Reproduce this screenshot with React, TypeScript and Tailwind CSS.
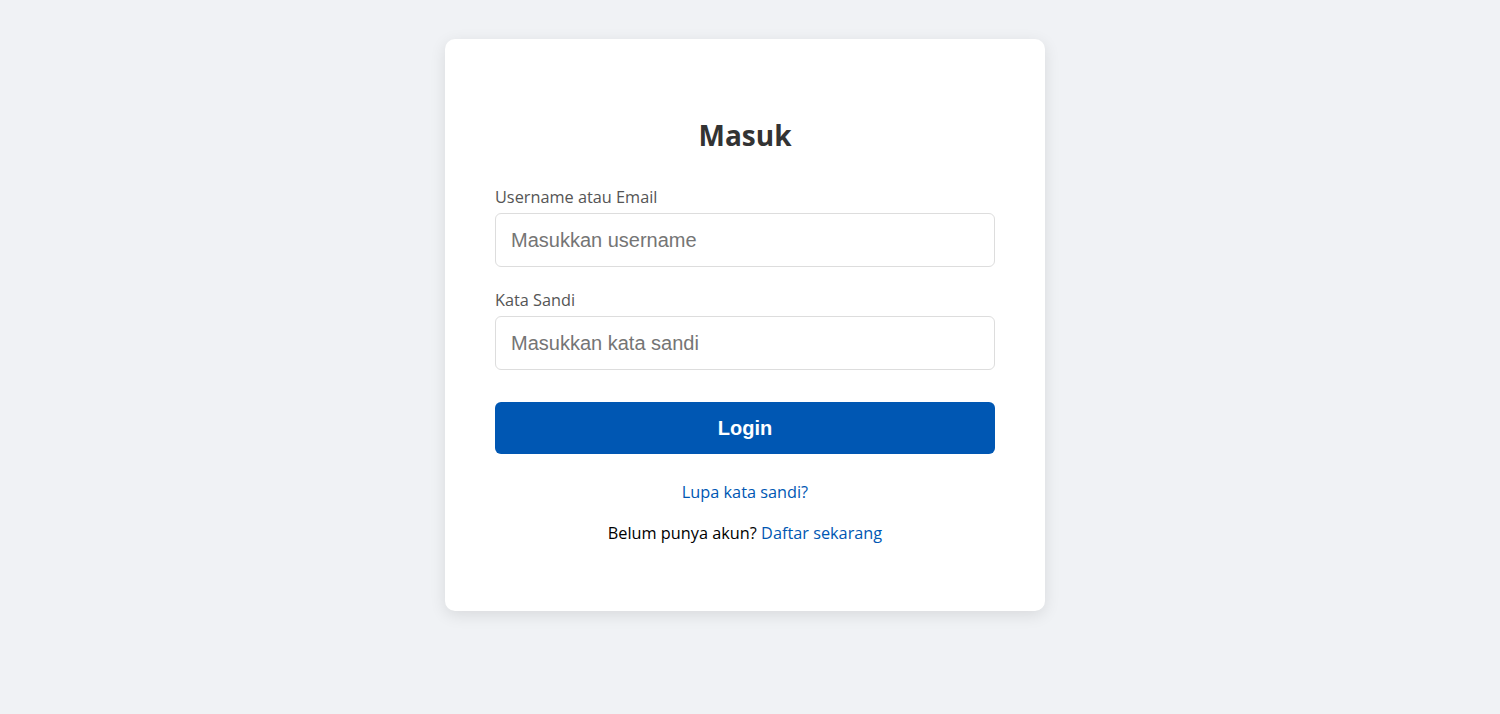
import React from "react";

export default function App() {
  const seg = { fontFamily: '"Open Sans", "Noto Sans", sans-serif' };
  const arial = { fontFamily: '"Liberation Sans", Arial, sans-serif' };
  return (
    <div className="min-h-[714px] w-full bg-[#f0f2f5] pr-[10px] pt-[39px]" style={seg}>
      <div className="mx-auto w-[600px] rounded-[10px] bg-white px-[50px] pb-[66px] pt-[50px] shadow-[0_4px_16px_rgba(0,0,0,0.1)]">
        <h2 className="mt-[29px] mb-[33px] text-center text-[28px] font-bold leading-[34px] text-[#333]">
          Masuk
        </h2>
        <form onSubmit={(e) => e.preventDefault()}>
          <div className="mb-[21px]">
            <label className="mb-1 block text-[16.3px] leading-6 text-[#555]">Username atau Email</label>
            <input
              type="text"
              placeholder="Masukkan username"
              className="block h-[54px] w-full rounded-[6px] border border-[#ddd] px-[15px] text-[20px] text-[#333] outline-none placeholder:text-[#757575]"
              style={arial}
            />
          </div>
          <div>
            <label className="mb-1 block text-[16.3px] leading-6 text-[#555]">Kata Sandi</label>
            <input
              type="password"
              placeholder="Masukkan kata sandi"
              className="block h-[54px] w-full rounded-[6px] border border-[#ddd] px-[15px] text-[20px] text-[#333] outline-none placeholder:text-[#757575]"
              style={arial}
            />
          </div>
          <button
            type="submit"
            className="mt-[32px] block h-[52px] w-full rounded-[6px] bg-[#0057b3] text-[20px] font-bold text-white"
            style={arial}
          >
            Login
          </button>
        </form>
        <div className="mt-[26px] text-center text-[16.3px] leading-6">
          <a href="#" className="text-[#0057b3]">Lupa kata sandi?</a>
        </div>
        <div className="mt-[17px] text-center text-[16.3px] leading-6 text-black">
          Belum punya akun? <a href="#" className="text-[#0057b3]">Daftar sekarang</a>
        </div>
      </div>
    </div>
  );
}
